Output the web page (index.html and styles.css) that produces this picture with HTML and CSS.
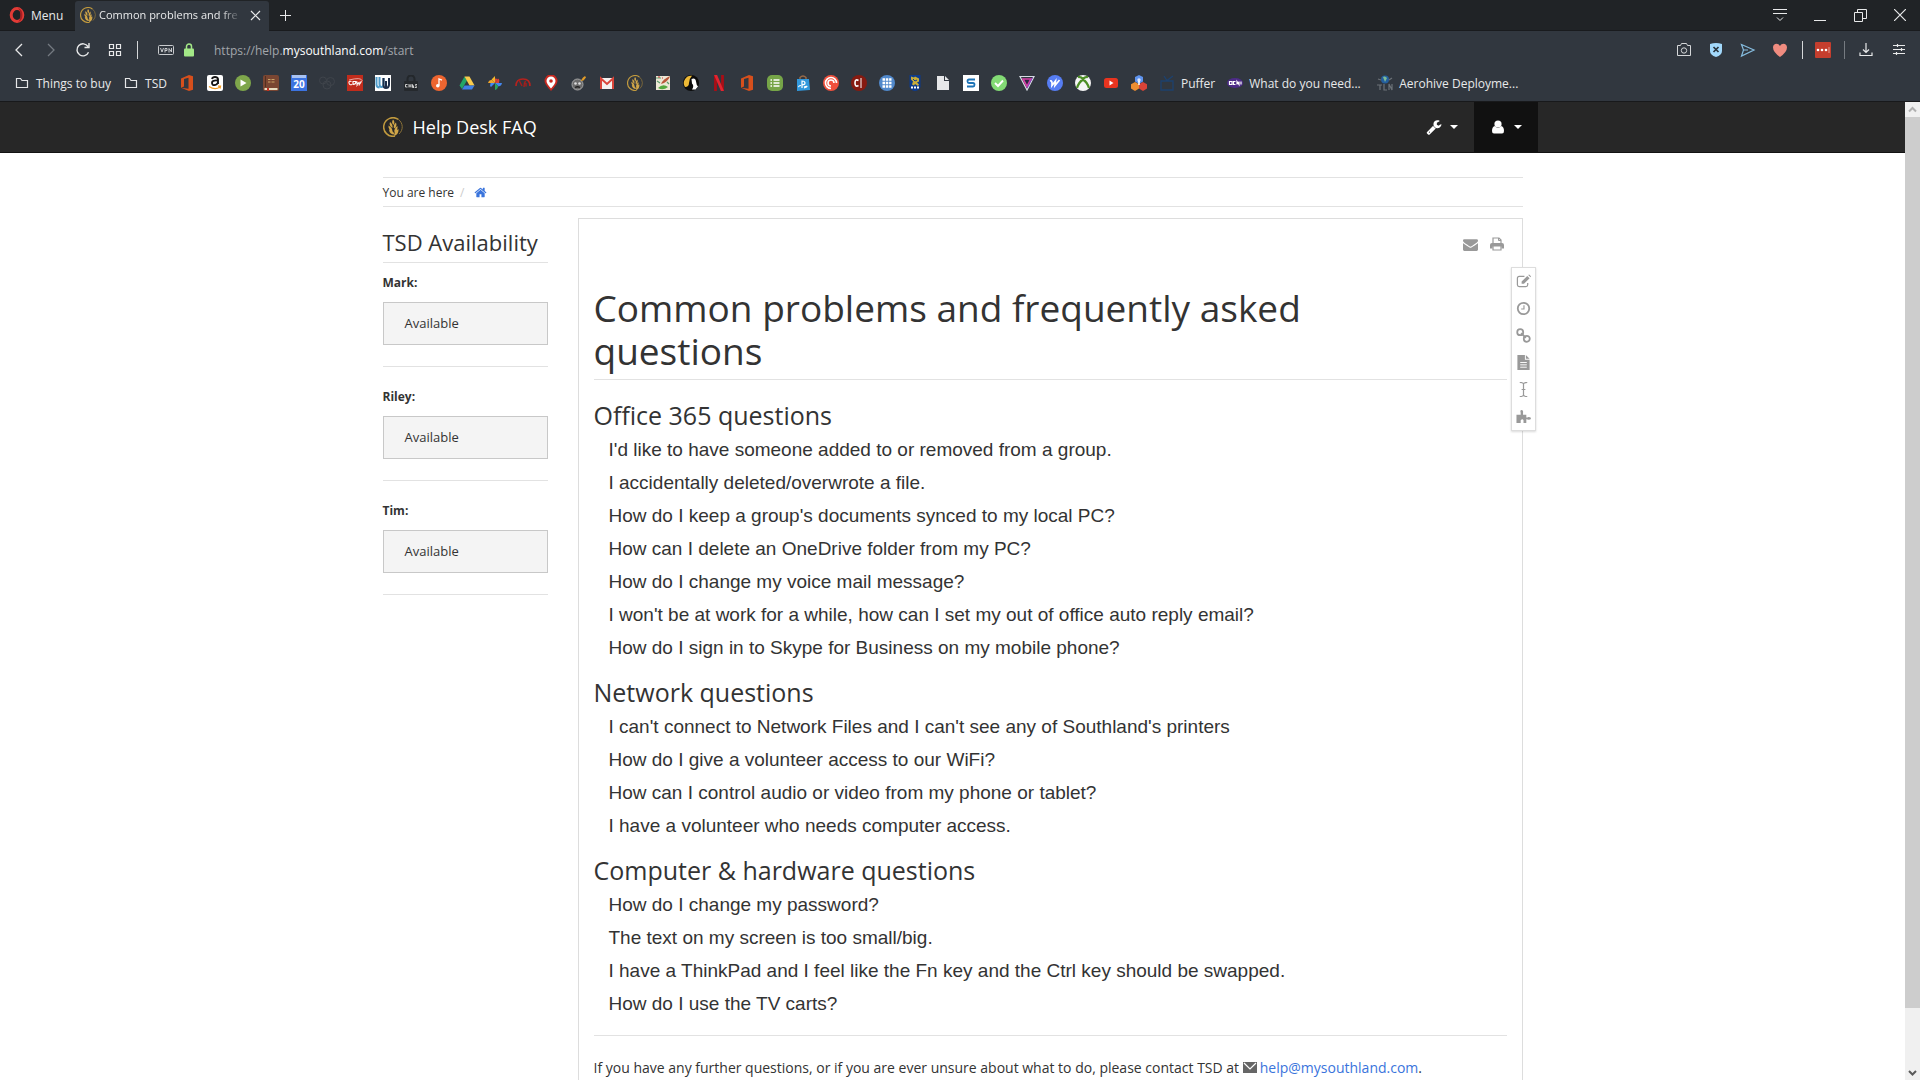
FILE: index.html
```html
<!DOCTYPE html>
<html lang="en">
<head>
    <meta charset="UTF-8">
    <meta name="viewport" content="width=device-width, initial-scale=1.0">
    <title>Common problems and frequently asked questions</title>
    <link rel="stylesheet" href="styles.css">
</head>
<body>
    <!-- shared symbols -->
    <svg class="symbols" aria-hidden="true">
        <symbol id="wheat" viewBox="0 0 20 20">
            <path d="M15.500 2.500A9.300 9.300 0 1 0 12 19.100" fill="none" stroke="#c19a3e" stroke-width="1.500"/>
            <path d="M15.500 2.500A9.300 9.300 0 0 1 16 17" fill="none" stroke="#8a7138" stroke-width="1"/>
            <path d="M10 2.500q2.500 2.500 .5 5.500Q8 5.500 10 2.500zM7 5q3 2 2.500 6Q5.500 8.500 7 5zM13 5.500q1.500 4-2 6Q10 7.500 13 5.500zM5.500 8.500q4 2 4 6Q5 12.500 5.500 8.500zM14.500 9q.5 5-3 6.500Q10.500 11.500 14.500 9zM6 12.500q4 .5 5.500 5Q6.500 17.500 6 12.500zM15.500 12q.5 5-4 7Q10.500 14.500 15.500 12z" fill="#cfa548"/>
        </symbol>
        <symbol id="folder" viewBox="0 0 16 16">
            <path d="M2.500 12.500v-9h4l1.500 2h5.500v7z" fill="none" stroke="#e6e7e9" stroke-width="1.200"/>
        </symbol>
        <symbol id="office" viewBox="0 0 16 16">
            <path d="M2 3.500 10 0l4 1.200v13.600L10 16 2 12.700l7.500 1V2.800L5 4v7.500l-3 1.200z" fill="#d64f1c"/>
        </symbol>
        <symbol id="envelope" viewBox="0 0 1792 1792">
            <path fill="currentColor" d="M1792 710v794q0 66-47 113t-113 47h-1472q-66 0-113-47t-47-113v-794q44 49 101 87 362 246 497 345 57 42 92 65t95 48 110 25h2q51 0 110-25t95-48 92-65q170-123 498-345 57-39 100-87zm0-294q0 79-49 151t-122 123q-376 261-468 325-10 7-42 31t-54 38-52 33-58 27-50 9h-2q-23 0-50-9t-58-27-52-33-54-38-42-31q-91-64-262-182t-205-143q-62-42-117-115t-55-137q0-78 41-130t119-52h1472q65 0 112 47t48 113z"/>
        </symbol>
    </svg>

    <div class="browser">
        <div class="tabs">
            <button class="menu">
                <svg width="16" height="16" viewBox="0 0 16 16"><ellipse cx="8" cy="8" rx="5.800" ry="6.500" fill="none" stroke="#e33b36" stroke-width="3"/><path d="M9 1.200c6 .5 6 13 0 13.600 3-1.500 3-12 0-13.600z" fill="#a81f22"/></svg>
                Menu
            </button>
            <div class="tab">
                <svg width="16" height="16"><use href="#wheat"/></svg>
                <span class="tab-title">Common problems and fre</span>
                <button class="plain" aria-label="Close tab"><svg width="11" height="11" viewBox="0 0 11 11"><path d="M1 1l9 9M10 1l-9 9" stroke="#e8e9ea" stroke-width="1.200"/></svg></button>
            </div>
            <button class="plain new-tab" aria-label="New tab"><svg width="11" height="11" viewBox="0 0 11 11"><path d="M5.500 0v11M0 5.500h11" stroke="#e8e9ea"/></svg></button>
            <div class="window-controls">
                <button aria-label="Tab menu"><svg width="16" height="14" viewBox="0 0 16 14"><path d="M1 1.500h14M1 5.500h14M5 9.500l3 3 3-3" fill="none" stroke="#e8e9ea"/></svg></button>
                <button aria-label="Minimize"><svg width="12" height="14" viewBox="0 0 12 14"><path d="M0 12.500h12" stroke="#e8e9ea"/></svg></button>
                <button aria-label="Restore"><svg width="13" height="13" viewBox="0 0 13 13"><path d="M.5 3.500h8v9h-8zM3.500 3V.5h9v9H9" fill="none" stroke="#e8e9ea"/></svg></button>
                <button aria-label="Close"><svg width="12" height="12" viewBox="0 0 12 12"><path d="M0 0l12 12M12 0L0 12" stroke="#e8e9ea" stroke-width="1.200"/></svg></button>
            </div>
        </div>

        <div class="toolbar">
            <div class="nav-buttons">
                <button aria-label="Back"><svg width="16" height="16" viewBox="0 0 16 16"><path d="M11 2L5 8l6 6" fill="none" stroke="#e8e9ea" stroke-width="1.300"/></svg></button>
                <button aria-label="Forward" disabled><svg width="16" height="16" viewBox="0 0 16 16"><path d="M5 2l6 6-6 6" fill="none" stroke="#747a81" stroke-width="1.300"/></svg></button>
                <button aria-label="Reload"><svg width="16" height="16" viewBox="0 0 16 16"><path d="M13.500 10.200A6 6 0 1 1 13 4.500M14 1v4.500H9.500" fill="none" stroke="#e8e9ea" stroke-width="1.400"/></svg></button>
                <button aria-label="Speed dial"><svg width="16" height="16" viewBox="0 0 16 16"><path d="M2.500 2.500h4v4h-4zM9.500 2.500h4v4h-4zM2.500 9.500h4v4h-4zM9.500 9.500h4v4h-4z" fill="none" stroke="#e8e9ea" stroke-width="1.200"/></svg></button>
            </div>
            <span class="divider"></span>
            <div class="address">
                <svg width="16" height="10" viewBox="0 0 16 10"><rect x=".5" y=".5" width="15" height="9" rx="1" fill="none" stroke="#c9cbce"/><path d="M2.500 3l1.500 4 1.500-4M7 7.500V3.500h2v2H7M11 7.500v-4l2.500 3.500V3" fill="none" stroke="#c9cbce"/></svg>
                <svg class="lock" width="10" height="14" viewBox="0 0 10 14"><path d="M2.500 6V3.500a2.500 2.500 0 0 1 5 0V6" fill="none" stroke="#a3e887" stroke-width="1.500"/><rect y="5.500" width="10" height="8" rx="1" fill="#a3e887"/></svg>
                <div class="url">
                    <span>https://help.</span><span class="domain">mysouthland.com</span><span>/start</span>
                    <input type="text" aria-label="Address">
                </div>
            </div>
            <div class="extensions">
                <button aria-label="Snapshot"><svg width="16" height="16" viewBox="0 0 16 16"><path d="M1.500 13.500v-10h3l1-2h5l1 2h3v10z" fill="none" stroke="#d5d7d9"/><circle cx="8" cy="8.500" r="2.700" fill="none" stroke="#d5d7d9"/></svg></button>
                <button aria-label="Ad blocker"><svg width="16" height="16" viewBox="0 0 16 16"><path d="M2 2q6-2 12 0v7q0 4-6 6-6-2-6-6z" fill="#a2d8fb"/><path d="M5.500 5l5 5M10.500 5l-5 5" stroke="#29333d" stroke-width="1.700"/></svg></button>
                <button aria-label="Send"><svg width="16" height="16" viewBox="0 0 16 16"><path d="M1.500 2.500L14 8 1.500 14l2-6z" fill="none" stroke="#86bde0" stroke-width="1.200"/><path d="M3.500 8H8" stroke="#86bde0"/></svg></button>
                <button aria-label="Bookmark"><svg width="16" height="16" viewBox="0 0 16 16"><path d="M8 15Q1 10 1 5.500C1 1.500 6 .5 8 4c2-3.500 7-2.500 7 1.500Q15 10 8 15z" fill="#f08c80"/></svg></button>
            </div>
            <span class="divider"></span>
            <button class="plain pass" aria-label="Password manager"><svg width="16" height="16" viewBox="0 0 16 16"><rect width="16" height="16" rx="1" fill="#c53e2e"/><circle cx="3" cy="8" r="1.300" fill="#fff"/><circle cx="7" cy="8" r="1.300" fill="#fff"/><circle cx="11" cy="8" r="1.300" fill="#fff"/><path d="M14 5v6" stroke="#e39a90"/></svg></button>
            <span class="divider dim"></span>
            <button class="plain" aria-label="Downloads"><svg width="16" height="16" viewBox="0 0 16 16"><path d="M8 1v9M5 7.500l3 3 3-3M2 10.500v3h12v-3" fill="none" stroke="#e8e9ea" stroke-width="1.200"/></svg></button>
            <button class="plain easy-setup" aria-label="Easy setup"><svg width="16" height="16" viewBox="0 0 16 16"><path d="M2 3.500h12M2 7.500h12M2 11.500h12M6.500 2v3M10.500 6v3M5.500 10v3" stroke="#e8e9ea" stroke-width="1.200"/></svg></button>
        </div>

        <nav class="bookmarks" aria-label="Bookmarks">
            <a href="#"><svg><use href="#folder"/></svg>Things to buy</a>
            <a href="#"><svg><use href="#folder"/></svg>TSD</a>
            <a href="#" aria-label="Office"><svg><use href="#office"/></svg></a>
            <a href="#" aria-label="Amazon"><svg viewBox="0 0 16 16"><rect width="16" height="16" rx="2" fill="#fff"/><path d="M5 4q.5-2 3-2t3 2v5M10.500 5.500Q5 5 5 7.800T8 10q2 0 2.500-2" fill="none" stroke="#151515" stroke-width="1.900"/><path d="M2 11.500q6 4 11 .5M11 11.200h2.500l-.5 2.300" fill="none" stroke="#f29a22" stroke-width="1.300"/></svg></a>
            <a href="#" aria-label="Play"><svg viewBox="0 0 16 16"><circle cx="8" cy="8" r="8" fill="#7ea64b"/><path d="M5.500 4.500l6 3.500-6 3.500z" fill="#fff"/></svg></a>
            <a href="#" aria-label="Bible"><svg viewBox="0 0 16 16"><rect width="16" height="16" rx="2" fill="#7a4632"/><path d="M1.500 13h13v2h-13z" fill="#e8dcc0"/><path d="M5 4.500h2.500M8.500 4.500h3M5 7h2.500M8.500 7h3" stroke="#c9a467" stroke-width="1.200"/><path d="M2.500 1v11" stroke="#54301f"/><path d="M4 13h2v3H4z" fill="#c43224"/></svg></a>
            <a href="#" aria-label="Calendar"><svg viewBox="0 0 16 16"><rect width="16" height="16" fill="#3c73e0"/><path d="M1 0h14v3H1z" fill="#a9c2f0"/><text x="8" y="13" text-anchor="middle" class="icon-text cal">20</text></svg></a>
            <a href="#" aria-label="Rings"><svg viewBox="0 0 16 16"><g fill="none" stroke="#3f444b"><circle cx="4" cy="5.500" r="3.500"/><circle cx="8" cy="10" r="4"/><circle cx="11.500" cy="6.500" r="4"/></g></svg></a>
            <a href="#" aria-label="CDW"><svg viewBox="0 0 16 16"><rect width="16" height="16" fill="#c12c1c"/><path d="M4.500 6.500Q1.500 5.500 2 8t3 1.500M6 6.500v3q3 0 3-3zM10 6.500v3l2-2 .5 2 1.500-3" fill="none" stroke="#fff" stroke-width="1.100"/><path d="M2 5q12-3 13 .5 0 3-6 6" fill="none" stroke="#f3c5c0" stroke-width=".8"/></svg></a>
            <a href="#" aria-label="Wave"><svg viewBox="0 0 16 16"><rect width="16" height="16" fill="#fff"/><path d="M1.500 2v7.500q0 3 3 3M4.500 2v7q0 3 2 3t2-3V3" fill="none" stroke="#4f9bc9" stroke-width="2"/><path d="M8.500 3v7q0 3 2.500 3t3-3V3M11 6v6" fill="none" stroke="#1c2d49" stroke-width="2"/></svg></a>
            <a href="#" aria-label="Lock"><svg viewBox="0 0 16 16"><path d="M4.500 7V4a3.500 3.500 0 0 1 7 0v3" fill="none" stroke="#23272b" stroke-width="2"/><rect x="1" y="6" width="14" height="10" rx="1" fill="#25292d"/><path d="M4.500 9.500h-2v2.500h2M6 9v3.500M8 9v3.500M6 11h2M9.500 9.500v3h1.500zM14 9.500h-1.500l1 3H12" fill="none" stroke="#ddd" stroke-width=".9"/></svg></a>
            <a href="#" aria-label="Music"><svg viewBox="0 0 16 16"><circle cx="8" cy="8" r="8" fill="#ee6530"/><path d="M8 10.500V4l3 1.200" fill="none" stroke="#fff" stroke-width="1.300"/><circle cx="6.800" cy="10.800" r="1.800" fill="#fff"/></svg></a>
            <a href="#" aria-label="Drive"><svg viewBox="0 0 16 16"><path d="M5.500 1.500L.5 10.500 3 14l5-8.500z" fill="#23a566"/><path d="M5.500 1.500h5l5 9h-5z" fill="#f9cb4c"/><path d="M5.500 10.500h10L13 14.500H3z" fill="#4080e6"/></svg></a>
            <a href="#" aria-label="Photos"><svg viewBox="0 0 16 16"><path d="M8 1v7L4.500 4.500z" fill="#f4b62a"/><path d="M1 8q1-3.500 4-3l3 3z" fill="#f0a52a"/><path d="M8 8l3.500-4.500Q13 5 12 8z" fill="#db4437"/><path d="M8 8V3.500L11 4z" fill="#db4437"/><path d="M15 8H8l3.500 3.500Q14.500 11 15 8z" fill="#4487f0"/><path d="M8 8v7q3-1 3-4z" fill="#2ba35c"/><path d="M8 8l-4 4q-1.500-1-.500-4z" fill="#4487f0"/></svg></a>
            <a href="#" aria-label="Speed test"><svg viewBox="0 0 16 16"><path d="M1 11Q1 4 8 4t7 7" fill="none" stroke="#b5221e" stroke-width="1.700"/><path d="M7 11L4 5M9 12q0-4 1.500-6M11 11.500V8" stroke="#a61e1b" stroke-width="1.400" fill="none"/></svg></a>
            <a href="#" aria-label="Maps"><svg viewBox="0 0 16 16"><path d="M8 16Q1.500 9 1.500 6A6.500 6.500 0 0 1 14.500 6Q14.500 9 8 16z" fill="#c9281f"/><path d="M8 13.500Q3.500 8.500 3.500 6a4.500 4.500 0 0 1 9 0q0 2.500-4.500 7.500z" fill="#fff"/><circle cx="8" cy="6" r="1.800" fill="#c9281f"/></svg></a>
            <a href="#" aria-label="Bomb"><svg viewBox="0 0 16 16"><circle cx="6.500" cy="9.500" r="5.500" fill="#6b6b6b" stroke="#a5a5a5"/><circle cx="4.500" cy="8.500" r="1.300" fill="#ddd"/><circle cx="8.500" cy="8.500" r="1.300" fill="#ddd"/><path d="M4 12.500q2.500-1.500 5 0" stroke="#222" stroke-width="1.300" fill="none"/><path d="M9.500 6L12 2.500 14 1l1 1.500-2.500 3z" fill="#e09b29"/></svg></a>
            <a href="#" aria-label="Gmail"><svg viewBox="0 0 16 16"><path d="M1 3h14v11H1z" fill="#f3f1ef"/><path d="M2 14V3.500L8 9l6-5.500V14" fill="none" stroke="#d9453a" stroke-width="2"/></svg></a>
            <a href="#" aria-label="Help Desk"><svg><use href="#wheat"/></svg></a>
            <a href="#" aria-label="Paint"><svg viewBox="0 0 16 16"><path d="M1 1h14v14H1z" fill="#ece7d5"/><path d="M1 3h5M2 6l3 2M12 7l2 2" stroke="#5b9b6b" stroke-width="1.200"/><path d="M15 1Q8 4 6 9l3-1q5-3 6-7z" fill="#b9573a"/><path d="M3 13q5-5 10-1-5 4-10 1z" fill="#54a93f"/><path d="M3 2h2M7 3h1" stroke="#c33"/></svg></a>
            <a href="#" aria-label="Profile"><svg viewBox="0 0 16 16"><circle cx="8" cy="8" r="8" fill="#0c0c0c"/><path d="M9 .8A7.300 7.300 0 0 0 2 12Q6 12 6 8t3-7.200z" fill="#edb936"/><path d="M8.500 4q4-1.500 4.500 2.500t2 5l-2.500 3H9q2.500-4 0-6z" fill="#fff"/></svg></a>
            <a href="#" aria-label="Netflix"><svg viewBox="0 0 16 16"><path d="M4.500 0v16M11.500 0v16" stroke="#a90e16" stroke-width="2.800"/><path d="M3.100 0h3l6.800 16h-3z" fill="#e32430"/></svg></a>
            <a href="#" aria-label="Office"><svg><use href="#office"/></svg></a>
            <a href="#" aria-label="List"><svg viewBox="0 0 16 16"><rect width="16" height="16" rx="5" fill="#76a548"/><path d="M3.500 5h1.500M6.500 5h6M3.500 8h1.500M6.500 8h6M3.500 11h1.500M6.500 11h6" stroke="#fff" stroke-width="1.600"/></svg></a>
            <a href="#" aria-label="Store"><svg viewBox="0 0 16 16"><path d="M5 5V2.500q3-3 6 0V5" fill="none" stroke="#9a6b48" stroke-width="1.400"/><path d="M2 4h12l1 11-13 1z" fill="#3198dc"/><path d="M7 13V6q3 0 3 2t-3 1.500M4 12q-1-1 2-1.500M9 12q3-1 3-.5t-3 1.500" fill="none" stroke="#fff" stroke-width="1.200"/></svg></a>
            <a href="#" aria-label="Pocket Casts"><svg viewBox="0 0 16 16"><circle cx="8" cy="8" r="8" fill="#f0503d"/><g fill="none" stroke="#fff" stroke-width="1.600"><path d="M8 13.500A5.500 5.500 0 1 1 13.500 8M8 11A3 3 0 1 1 11 8"/></g></svg></a>
            <a href="#" aria-label="C"><svg viewBox="0 0 16 16"><circle cx="8" cy="8" r="8" fill="#861a10"/><path d="M7.500 5.500Q4 3.500 4 8t3.500 2.500" fill="none" stroke="#fff" stroke-width="1.600"/><path d="M10 3v10" stroke="#fff"/></svg></a>
            <a href="#" aria-label="Apps"><svg viewBox="0 0 16 16"><circle cx="8" cy="8" r="8" fill="#5189cc"/><path d="M3.500 4.500h9M3.500 8h9M3.500 11.500h9" stroke="#fff" stroke-width="2.500" stroke-dasharray="2.500 .8"/></svg></a>
            <a href="#" aria-label="RBC"><svg viewBox="0 0 16 16"><path d="M2.500 0h11v12q-2 4-5.500 4t-5.500-4z" fill="#0d3b8c"/><path d="M4 1.500l3 1 1-1 4 2v3l-2 1 2 2-1 1.500-3-2-1 1.500-2-1 1-3-2-2z" fill="#c9ad38"/><path d="M6 4l2 2 2-1" stroke="#0d3b8c" fill="none"/><path d="M4 12.500h2M7 12.500h2M10 12.500h2" stroke="#fff" stroke-width="2"/></svg></a>
            <a href="#" aria-label="File"><svg viewBox="0 0 16 16"><path d="M2 1h7v5h5v9H2z" fill="#e6e7e9"/><path d="M10 1l4 4h-4z" fill="#e6e7e9"/></svg></a>
            <a href="#" aria-label="S"><svg viewBox="0 0 16 16"><rect width="16" height="16" fill="#fff"/><path d="M12 4.500H6q-1.500 0-1.500 1.700T6 8h4q1.500 0 1.500 1.700T10 11.500H4" fill="none" stroke="#1d73b6" stroke-width="1.800"/></svg></a>
            <a href="#" aria-label="Check"><svg viewBox="0 0 16 16"><circle cx="8" cy="8" r="8" fill="#83db75"/><path d="M4 8l3 3 5-5.500" fill="none" stroke="#fff" stroke-width="1.900"/></svg></a>
            <a href="#" aria-label="Triangle"><svg viewBox="0 0 16 16"><path d="M1 1.500h14L8 15z" fill="none" stroke="#d6dbe4" stroke-width="1.200"/><path d="M4 4h8L8 11.500z" fill="#2b2640" stroke="#d63fa5" stroke-width="1.600"/><path d="M13.500 2.500L8 13" stroke="#8d47c6"/></svg></a>
            <a href="#" aria-label="W"><svg viewBox="0 0 16 16"><circle cx="8" cy="8" r="8" fill="#567df3"/><path d="M3 6q2.500-1 2 4.500L8.500 6l-.5 4.500L12.500 5" fill="none" stroke="#fff" stroke-width="1.700"/></svg></a>
            <a href="#" aria-label="Xbox"><svg viewBox="0 0 16 16"><circle cx="8" cy="8" r="8" fill="#f5f5f5"/><path d="M3 2q3-.5 5 2 2-2.500 5-2M2 13Q4 7 7.500 5M14 13Q12 7 8.500 5" fill="none" stroke="#4d8e26" stroke-width="2.300"/></svg></a>
            <a href="#" aria-label="YouTube"><svg viewBox="0 0 16 16"><rect x="1" y="3" width="14" height="10" rx="2.500" fill="#e8341f"/><path d="M6.500 5.500l4 2.500-4 2.500z" fill="#fff"/></svg></a>
            <a href="#" aria-label="Hexagons"><svg viewBox="0 0 16 16"><path d="M8 0l4 2v4.500L8 9 4 6.500V2z" fill="#5e93ee"/><path d="M4 7l4 2.200v4.300L4 16l-4-2.500V9.200z" fill="#ec8e32"/><path d="M12 7l4 2.200v4.300L12 16l-4-2.500V9.200z" fill="#d94337"/><circle cx="8" cy="5" r="1.700" fill="#dfe9fb"/><path d="M8 6v4" stroke="#fff" stroke-width="1.500"/></svg></a>
            <a href="#"><svg viewBox="0 0 16 16"><path d="M2 6h12v9H2zM5 1l3 4.500L14 1" fill="none" stroke="#1d416e" stroke-width="1.300"/></svg>Puffer</a>
            <a href="#" class="wide"><svg viewBox="0 0 16 16"><ellipse cx="8" cy="8" rx="8" ry="5" fill="#4c2b87"/><path d="M2.500 6.500v3h2.500v-3zM8.500 6.500h-2v3h2M10 9.500v-3l2 3v-3M14 6.500v3" fill="none" stroke="#fff" stroke-width="1.200"/></svg>What do you need...</a>
            <a href="#" class="wide"><svg viewBox="0 0 16 16"><circle cx="8" cy="4.500" r="4" fill="#245f9e"/><path d="M6 2q2-1.500 4 1L8 7z" fill="#7fbb93"/><path d="M1 4l3 1M15 3l-3 2M0 10h5M3 10v5M7 9v6h3M12 15V9l3 6V9" fill="none" stroke="#6c7278" stroke-width="1.200"/></svg>Aerohive Deployme...</a>
        </nav>
    </div>

    <div class="viewport">
        <div class="page">
            <header class="navbar">
                <div class="container navbar-inner">
                    <a href="#" class="brand"><svg width="20" height="20"><use href="#wheat"/></svg>Help Desk FAQ</a>
                    <div class="navbar-right">
                        <button class="nav-menu" aria-label="Tools">
                            <svg width="16" height="16" viewBox="0 0 1792 1792"><path fill="#fff" d="M448 1472q0-26-19-45t-45-19-45 19-19 45 19 45 45 19 45-19 19-45zm644-420l-682 682q-37 37-90 37-52 0-91-37l-106-108q-38-36-38-90 0-53 38-91l681-681q39 98 114 173t174 115zm634-435q0 39-23 106-47 134-164 217t-259 84q-185 0-316-131t-132-317 132-317 316-131q58 0 121 16t108 47q16 11 16 28t-16 28l-293 169v224l193 107q5-3 79-48t135-81 71-36q15 0 24 10t8 25z"/></svg>
                            <span class="caret"></span>
                        </button>
                        <button class="nav-menu active" aria-label="User">
                            <svg width="16" height="16" viewBox="0 0 16 16"><circle cx="8" cy="5" r="3.600" fill="#fff"/><path d="M4.500 7q3.500 3.500 7 0 2.500 1 2.500 5 0 2.500-2 2.500H4q-2 0-2-2.500 0-4 2.500-5z" fill="#fff"/></svg>
                            <span class="caret"></span>
                        </button>
                    </div>
                </div>
            </header>

            <div class="container">
                <nav class="breadcrumb" aria-label="Breadcrumb">
                    <span>You are here</span>
                    <span class="slash">/</span>
                    <a href="#" aria-label="Home"><svg width="13" height="13" viewBox="0 0 1792 1792"><path fill="currentColor" d="M1472 992v480q0 26-19 45t-45 19h-384v-384h-256v384h-384q-26 0-45-19t-19-45v-480q0-1 0-3t1-3l575-474 575 474q1 2 1 6zm223-69l-62 74q-8 9-21 11h-3q-13 0-21-7l-692-577-692 577q-12 8-24 7-13-2-21-11l-62-74q-8-10-7-23t11-22l719-599q32-26 76-26t76 26l244 204v-195q0-14 9-23t23-9h192q14 0 23 9t9 23v408l219 182q10 8 11 22t-7 23z"/></svg></a>
                </nav>

                <div class="row">
                    <aside class="sidebar">
                        <h2>TSD Availability</h2>
                        <section>
                            <h3>Mark:</h3>
                            <div class="status">Available</div>
                        </section>
                        <section>
                            <h3>Riley:</h3>
                            <div class="status">Available</div>
                        </section>
                        <section>
                            <h3>Tim:</h3>
                            <div class="status">Available</div>
                        </section>
                    </aside>

                    <main class="panel">
                        <div class="actions">
                            <button aria-label="Send page by mail"><svg width="15" height="15"><use href="#envelope"/></svg></button>
                            <button aria-label="Print"><svg width="14" height="14" viewBox="0 0 14 14"><path d="M3 6V1h6l2 2v3" fill="none" stroke="currentColor" stroke-width="1.200"/><path d="M8.500 1v2.500H11" fill="none" stroke="currentColor"/><path d="M2 6h10q2 0 2 2v3.500h-2.500v-2h-9v2H0V8q0-2 2-2z" fill="currentColor"/><path d="M3 9v4h8V9" fill="none" stroke="currentColor" stroke-width="1.200"/></svg></button>
                        </div>

                        <h1>Common problems and frequently asked questions</h1>

                        <h2>Office 365 questions</h2>
                        <ul>
                            <li><a href="#">I'd like to have someone added to or removed from a group.</a></li>
                            <li><a href="#">I accidentally deleted/overwrote a file.</a></li>
                            <li><a href="#">How do I keep a group's documents synced to my local PC?</a></li>
                            <li><a href="#">How can I delete an OneDrive folder from my PC?</a></li>
                            <li><a href="#">How do I change my voice mail message?</a></li>
                            <li><a href="#">I won't be at work for a while, how can I set my out of office auto reply email?</a></li>
                            <li><a href="#">How do I sign in to Skype for Business on my mobile phone?</a></li>
                        </ul>

                        <h2>Network questions</h2>
                        <ul>
                            <li><a href="#">I can't connect to Network Files and I can't see any of Southland's printers</a></li>
                            <li><a href="#">How do I give a volunteer access to our WiFi?</a></li>
                            <li><a href="#">How can I control audio or video from my phone or tablet?</a></li>
                            <li><a href="#">I have a volunteer who needs computer access.</a></li>
                        </ul>

                        <h2>Computer &amp; hardware questions</h2>
                        <ul>
                            <li><a href="#">How do I change my password?</a></li>
                            <li><a href="#">The text on my screen is too small/big.</a></li>
                            <li><a href="#">I have a ThinkPad and I feel like the Fn key and the Ctrl key should be swapped.</a></li>
                            <li><a href="#">How do I use the TV carts?</a></li>
                        </ul>

                        <hr>
                        <p>If you have any further questions, or if you are ever unsure about what to do, please contact TSD at <a href="mailto:help@mysouthland.com"><svg class="mail-icon" width="14" height="11" viewBox="0 0 14 11"><rect width="14" height="11" fill="#666"/><path d="M1 1l6 6 6-6" fill="none" stroke="#fff" stroke-width="1.200"/></svg>help@mysouthland.com</a>.</p>

                        <div class="page-tools">
                            <button aria-label="Edit this page"><svg viewBox="0 0 16 16"><path d="M9 2.500H3.500q-2 0-2 2v7q0 2 2 2h7q2 0 2-2V9.500" fill="none" stroke="currentColor" stroke-width="1.300"/><path d="M6 10.500V8l6-6 2.500 2.500-6 6zM13 1l1-.5 2 2-.5 1z" fill="currentColor"/></svg></button>
                            <button aria-label="Old revisions"><svg viewBox="0 0 16 16"><circle cx="8" cy="8" r="6.100" fill="none" stroke="currentColor" stroke-width="1.900"/><path d="M8.500 4.500v4H5.500" fill="none" stroke="currentColor" stroke-width="1.200"/></svg></button>
                            <button aria-label="Backlinks"><svg viewBox="0 0 16 16"><g fill="none" stroke="currentColor" stroke-width="1.900"><circle cx="4.500" cy="4.500" r="3.200"/><circle cx="11.500" cy="11.500" r="3.200"/><path d="M5.500 5.500l5 5"/></g></svg></button>
                            <button aria-label="Page copy"><svg viewBox="0 0 16 16"><path d="M1.500 0h8v5h5v11h-13z" fill="currentColor"/><path d="M10.500 0l4 4h-4z" fill="currentColor"/><path d="M4.500 8h7M4.500 10.500h7M4.500 13h7" stroke="#fff"/></svg></button>
                            <button aria-label="Rename page"><svg viewBox="0 0 16 16"><path d="M4 .5q4 0 4 2 0-2 4-2M4 15.500q4 0 4-2 0 2 4 2M8 2v12M6 8h4" fill="none" stroke="currentColor" stroke-width="1.300"/></svg></button>
                            <button aria-label="Plugins"><svg viewBox="0 0 16 16"><path d="M.5 6h4.500V4Q4 1 6 1t1.500 3v2H11v3q1 .5 2-.5 3 0 3 1.500T13 11.500q-1-1-2-.5v4H8v-3q-1-2-3 0v3H.5z" fill="currentColor"/></svg></button>
                        </div>
                    </main>
                </div>
            </div>
        </div>

        <div class="scrollbar" aria-hidden="true">
            <svg width="15" height="15" viewBox="0 0 15 15"><path d="M4 9.500L7.500 6 11 9.500" fill="none" stroke="#b0b0b0" stroke-width="2"/></svg>
            <div class="track"><div class="thumb"></div></div>
            <svg width="15" height="15" viewBox="0 0 15 15"><path d="M4 6l3.500 3.500L11 6" fill="none" stroke="#5a5a5a" stroke-width="2"/></svg>
        </div>
    </div>
</body>
</html>
```

FILE: styles.css
```css
* {
    box-sizing: border-box;
}
body {
    margin: 0;
    height: 100vh;
    display: flex;
    flex-direction: column;
    overflow: hidden;
    font-family: "Open Sans", "Noto Sans", sans-serif;
    font-size: 13px;
    color: #333;
    background: #fff;
}
button {
    padding: 0;
    border: none;
    background: none;
    font: inherit;
    color: inherit;
    display: flex;
    align-items: center;
    justify-content: center;
}
a {
    color: #3a74dc;
    text-decoration: none;
}
.symbols {
    position: absolute;
    width: 0;
    height: 0;
}

/* browser chrome */
.browser {
    flex: none;
    background: #31373f;
    border-bottom: 1px solid #18191b;
    color: #e8e9ea;
    font-size: 12px;
}
.tabs {
    display: flex;
    height: 31px;
    background: #202326;
    border-bottom: 1px solid #191b1e;
}
.menu {
    width: 75px;
    padding-left: 9px;
    justify-content: flex-start;
    gap: 6px;
}
.tab {
    display: flex;
    align-items: center;
    width: 194px;
    height: 30px;
    margin-top: 1px;
    padding: 0 8px 2px 5px;
    background: #31373f;
    border-radius: 3px 3px 0 0;
}
.tab svg {
    flex: none;
}
.tab-title {
    flex: 1;
    margin: 0 8px 0 3px;
    font-size: 11px;
    line-height: 20px;
    white-space: nowrap;
    -webkit-mask-image: linear-gradient(to right, #000 85%, transparent);
    mask-image: linear-gradient(to right, #000 85%, transparent);
}
.new-tab {
    width: 33px;
}
.window-controls {
    display: flex;
    margin-left: auto;
}
.window-controls button {
    width: 40px;
}
.toolbar {
    display: flex;
    align-items: center;
    height: 38px;
    padding-left: 3px;
}
.nav-buttons, .extensions {
    display: flex;
}
.nav-buttons button, .extensions button {
    width: 32px;
}
.divider {
    width: 1px;
    height: 18px;
    margin: 0 6px;
    background: #d5d7d9;
}
.divider.dim {
    margin: 0 13px;
    background: #767b81;
}
.address {
    display: flex;
    align-items: center;
    flex: 1;
    margin-left: 14px;
}
.lock {
    margin: 0 20px 0 10px;
}
.url {
    position: relative;
    display: flex;
    flex: 1;
    color: #a2a6ab;
}
.url input {
    position: absolute;
    inset: 0;
    width: 100%;
    border: none;
    background: none;
    font: inherit;
    color: inherit;
}
.domain {
    color: #fff;
}
.pass {
    margin-left: 6px;
}
.easy-setup {
    margin: 0 13px 0 17px;
}
.bookmarks {
    display: flex;
    align-items: center;
    gap: 12px;
    height: 32px;
    padding: 0 14px 4px;
}
.bookmarks a {
    display: flex;
    align-items: center;
    gap: 6px;
    color: #e8e9ea;
    white-space: nowrap;
}
.bookmarks svg {
    flex: none;
    width: 16px;
    height: 16px;
}
.bookmarks .wide {
    min-width: 138px;
}
.icon-text {
    font-family: "Open Sans", sans-serif;
    font-weight: 700;
    fill: #fff;
}
.cal {
    font-size: 10px;
}

/* page */
.viewport {
    flex: 1;
    display: flex;
    min-height: 0;
}
.page {
    flex: 1;
    overflow: hidden;
}
.container {
    max-width: 1170px;
    margin: 0 auto;
    padding: 0 15px;
}
.navbar {
    background: #272727;
    border-bottom: 1px solid #121212;
    color: #fff;
}
.navbar-inner {
    display: flex;
    justify-content: space-between;
    height: 50px;
    padding-right: 0;
}
.brand {
    display: flex;
    align-items: center;
    gap: 10px;
    font-size: 18px;
    color: #fff;
}
.navbar-right {
    display: flex;
}
.nav-menu {
    width: 64px;
    gap: 8px;
}
.nav-menu.active {
    background: #111;
}
.caret {
    border: 4px solid transparent;
    border-top-color: #fff;
    border-bottom: none;
}
.breadcrumb {
    display: flex;
    align-items: center;
    gap: 6px;
    height: 30px;
    margin: 24px 0 11px;
    border-top: 1px solid #e2e2e2;
    border-bottom: 1px solid #e2e2e2;
    font-size: 12px;
}
.breadcrumb .slash {
    color: #ccc;
}
.breadcrumb a {
    display: flex;
    margin-left: 4px;
}
.row {
    display: flex;
    gap: 30px;
}
.sidebar {
    flex: none;
    width: 165px;
    padding-top: 10px;
}
.sidebar h2 {
    margin: 0;
    padding-bottom: 6px;
    border-bottom: 1px solid #e2e2e2;
    font-size: 22px;
    line-height: 28px;
    font-weight: 400;
    white-space: nowrap;
}
.sidebar h3 {
    margin: 0 0 9px;
    font-size: 12px;
    line-height: 20px;
}
.sidebar section {
    padding: 20px 0 21px;
    border-bottom: 1px solid #e2e2e2;
}
.sidebar h2 + section {
    padding-top: 10px;
}
.status {
    padding: 10px 21px;
    border: 1px solid #c8c8c8;
    background: #f4f4f4;
    font-size: 13px;
    line-height: 21px;
}
.panel {
    position: relative;
    flex: 1;
    padding: 14px 15px 60px;
    border: 1px solid #ddd;
}
.actions {
    display: flex;
    justify-content: flex-end;
    gap: 6px;
    margin-bottom: 31px;
    color: #999;
}
.actions button {
    width: 20px;
    height: 22px;
}
.panel h1 {
    margin: 0;
    padding: 0 60px 7px 0;
    border-bottom: 1px solid #e2e2e2;
    font-size: 37px;
    line-height: 43px;
    font-weight: 400;
}
.panel h2 {
    margin: 14px 0 3px;
    font-size: 25px;
    line-height: 29px;
    font-weight: 400;
}
.panel h1 + h2 {
    margin-top: 21px;
}
.panel ul {
    margin: 0;
    padding: 0 0 0 15px;
    list-style: none;
    font-family: "Liberation Sans", Arial, sans-serif;
    font-size: 19px;
    line-height: 33px;
}
.panel li a {
    color: #333;
}
.panel hr {
    margin: 15px 0 21px;
    border: none;
    border-top: 1px solid #e2e2e2;
}
.panel p {
    margin: 0;
    font-size: 14px;
    line-height: 22px;
}
.mail-icon {
    margin-right: 3px;
}
.page-tools {
    position: absolute;
    top: 48px;
    right: -14px;
    width: 25px;
    border: 1px solid #ddd;
    background: #fff;
    box-shadow: 0 1px 2px rgba(0, 0, 0, 0.15);
    color: #999;
}
.page-tools button {
    width: 23px;
    height: 27px;
}
.page-tools svg {
    width: 15px;
    height: 15px;
}
.scrollbar {
    display: flex;
    flex-direction: column;
    width: 15px;
    background: #f0f0f0;
}
.track {
    flex: 1;
}
.thumb {
    height: 94%;
    background: #cdcdcd;
}
```
